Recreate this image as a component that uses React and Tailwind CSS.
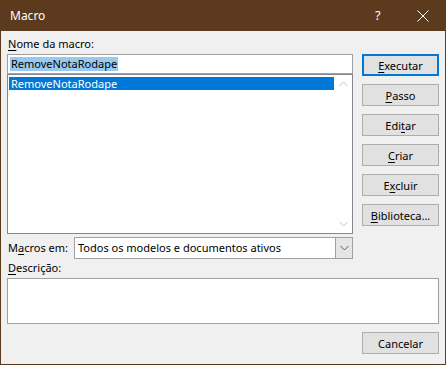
import React from "react";

const font = { fontFamily: '"Noto Sans", "Open Sans", sans-serif' };

function Btn({ children, primary }) {
  return (
    <button
      className={
        primary
          ? "block h-[22px] w-full bg-[#e1e1e1] border-2 border-[#0078d7] text-[11px] text-black leading-none"
          : "block h-[22px] w-full bg-[#e1e1e1] border border-[#adadad] text-[11px] text-black leading-none"
      }
    >
      {children}
    </button>
  );
}

function Key({ children }) {
  return <span className="underline underline-offset-2">{children}</span>;
}

function Chevron({ up, color }) {
  return (
    <svg width="9" height="6" viewBox="0 0 9 6">
      <path
        d={up ? "M0.5 5 L4.5 1 L8.5 5" : "M0.5 1 L4.5 5 L8.5 1"}
        fill="none"
        stroke={color}
        strokeWidth="1"
      />
    </svg>
  );
}

export default function App() {
  return (
    <div
      className="w-[446px] h-[365px] bg-[#f0f0f0] border-x border-b border-[#5b3a1d] flex flex-col text-black"
      style={font}
    >
      {/* title bar */}
      <div className="h-[31px] bg-[#5b3a1d] flex items-center text-white text-[12px] -mx-px shrink-0">
        <span className="pl-[10px] flex-1">Macro</span>
        <span className="w-[6px] text-[13px] mr-[36px] leading-none">?</span>
        <svg width="12" height="12" viewBox="0 0 12 12" className="mr-[17px]">
          <path d="M0.5 0.5 L11.5 11.5 M11.5 0.5 L0.5 11.5" stroke="white" strokeWidth="1" />
        </svg>
      </div>

      {/* body */}
      <div className="flex-1 flex flex-col px-[6px] pt-[6px]">
        <div className="flex gap-[9px]">
          {/* left column */}
          <div className="w-[346px] flex flex-col">
            <div className="h-[17px] text-[11px] leading-[14px] pl-[1px]">
              <Key>N</Key>ome da macro:
            </div>
            <div className="h-[20px] bg-white border border-[#a0a0a0] flex items-center pl-[2px]">
              <span className="bg-[#99c9ef] text-[11px] leading-[14px] px-[1px]">RemoveNotaRodape</span>
            </div>
            <div className="h-[160px] bg-white border border-[#828790] flex">
              <div className="flex-1 p-[1px] pt-[2px]">
                <div className="h-[13px] bg-[#0078d7] text-white text-[11px] leading-[13px] pl-[2px]">
                  RemoveNotaRodape
                </div>
              </div>
              <div className="w-[17px] flex flex-col justify-between items-center py-[6px]">
                <Chevron up color="#c2c2c2" />
                <Chevron color="#c2c2c2" />
              </div>
            </div>
            <div className="mt-[3px] flex items-center h-[22px]">
              <span className="w-[67px] text-[11px] pl-[1px]">
                M<Key>a</Key>cros em:
              </span>
              <div className="flex-1 h-[22px] bg-white border border-[#a0a0a0] flex items-center">
                <span className="flex-1 text-[11px] pl-[3px]">Todos os modelos e documentos ativos</span>
                <div className="w-[17px] h-full bg-[#e5e5e5] border-l border-[#a0a0a0] flex items-center justify-center">
                  <Chevron color="#606060" />
                </div>
              </div>
            </div>
          </div>

          {/* right column */}
          <div className="flex-1 flex flex-col gap-[8px] pt-[17px]">
            <Btn primary>
              <Key>E</Key>xecutar
            </Btn>
            <Btn>
              <Key>P</Key>asso
            </Btn>
            <Btn>
              Edi<Key>t</Key>ar
            </Btn>
            <Btn>
              <Key>C</Key>riar
            </Btn>
            <Btn>
              E<Key>x</Key>cluir
            </Btn>
            <Btn>
              <Key>B</Key>iblioteca...
            </Btn>
          </div>
        </div>

        <div className="h-[19px] flex items-center text-[11px] pl-[1px]">
          <span>
            <Key>D</Key>escrição:
          </span>
        </div>
        <div className="h-[46px] bg-white border border-[#a0a0a0]" />

        <div className="flex justify-end mt-[8px]">
          <div className="w-[77px] flex">
            <Btn>Cancelar</Btn>
          </div>
        </div>
      </div>
    </div>
  );
}
